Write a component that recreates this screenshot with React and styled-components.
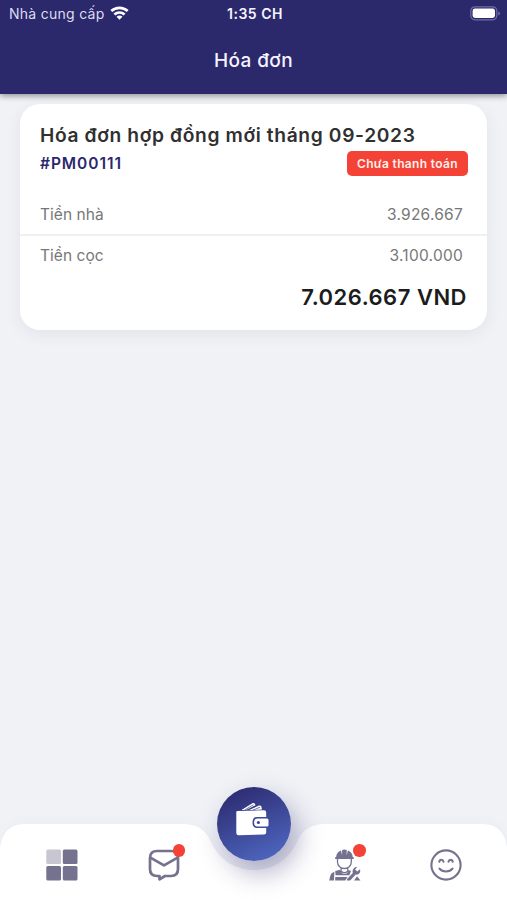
import React from "react";
import styled, { createGlobalStyle } from "styled-components";

const lines = [
  { label: "Tiền nhà", amount: "3.926.667" },
  { label: "Tiền cọc", amount: "3.100.000" },
];

export default function App() {
  return (
    <>
      <GlobalStyle />
      <Screen>
        <Header>
          <StatusBar>
            <Carrier>
              Nhà cung cấp <WifiIcon />
            </Carrier>
            <Clock>1:35 CH</Clock>
            <BatteryIcon />
          </StatusBar>
          <PageTitle>Hóa đơn</PageTitle>
        </Header>
        <Main>
          <Card>
            <CardTitle>Hóa đơn hợp đồng mới tháng 09-2023</CardTitle>
            <CardMeta>
              <Code>#PM00111</Code>
              <Status>Chưa thanh toán</Status>
            </CardMeta>
            {lines.map((line) => (
              <Line key={line.label}>
                <span>{line.label}</span>
                <Amount>{line.amount}</Amount>
              </Line>
            ))}
            <Total>7.026.667 VND</Total>
          </Card>
        </Main>
        <Nav>
          <NavShape />
          <NavItem>
            <GridIcon />
          </NavItem>
          <NavItem>
            <MailIcon />
            <Dot />
          </NavItem>
          <WalletButton aria-label="Hóa đơn">
            <WalletIcon />
          </WalletButton>
          <NavItem>
            <WorkerIcon />
            <Dot />
          </NavItem>
          <NavItem>
            <SmileIcon />
          </NavItem>
        </Nav>
      </Screen>
    </>
  );
}

function WifiIcon() {
  return (
    <svg width="19" height="15" viewBox="0 0 19 15" fill="none" stroke="#fff" strokeWidth="2.7">
      <path d="M1.3 5.1C6 .7 13 .7 17.7 5.1" />
      <path d="M4.4 8.5C7.3 5.8 11.7 5.8 14.6 8.5" />
      <path d="M9.5 13.8 6.5 10.7C8.2 9.2 10.8 9.2 12.5 10.7Z" fill="#fff" stroke="none" />
    </svg>
  );
}

function BatteryIcon() {
  return (
    <svg width="31" height="15" viewBox="0 0 31 15">
      <rect x=".8" y=".8" width="26" height="13" rx="4" fill="none" stroke="#716da3" strokeWidth="1.2" />
      <rect x="2.6" y="2.6" width="22.4" height="9.4" rx="2.4" fill="#fff" />
      <path d="M28.2 5.2Q30 6 30 7.4T28.2 9.5Z" fill="#716da3" />
    </svg>
  );
}

function NavShape() {
  return (
    <Backdrop viewBox="0 0 507 76" preserveAspectRatio="none">
      <path
        d="M0 76V24Q3 0 24 0H182C199 0 206 7 211 18C220 37 236 46 254 46S288 37 297 18C302 7 309 0 326 0H483Q504 0 507 24V76Z"
        fill="#fff"
      />
    </Backdrop>
  );
}

function GridIcon() {
  return (
    <svg width="32" height="32" viewBox="0 0 32 32" fill="#74728e">
      <rect x=".3" y=".4" width="14.7" height="14.5" rx="1.5" fill="#c7c6d1" />
      <rect x="16.8" y=".4" width="14.7" height="14.5" rx="1.5" />
      <rect x=".3" y="17" width="14.7" height="14.5" rx="1.5" />
      <rect x="16.8" y="17" width="14.7" height="14.5" rx="1.5" />
    </svg>
  );
}

function MailIcon() {
  return (
    <svg width="32" height="32" viewBox="0 0 32 32" fill="none" stroke="#74728e" strokeWidth="2.7" strokeLinejoin="round">
      <path d="M9 2H23Q30 2 30 9V20Q30 27 23 27H17L11.5 30.3V27H9Q2 27 2 20V9Q2 2 9 2Z" />
      <path d="M2.4 8.6 16 16.4 29.6 8.6" />
    </svg>
  );
}

function WalletIcon() {
  return (
    <svg width="34" height="34" viewBox="0 0 34 34" fill="#fff">
      <path d="M6.5 8.1 17.7 1.1Q19.2.5 20 2L20.5 3.2 11 8.1Z" />
      <path d="M14 8.1 24 3.6Q25.7 3 26.3 4.6L27 7.6Z" />
      <path d="M9.5 8.1 18.5 2.8M18 8.2 25 5.2" stroke="#363a88" strokeWidth=".7" />
      <path d="M2.2 9.1 29 8.3Q31.2 8.3 31.2 10.5V15H22Q17.5 15 17.5 20.5T22 26H31.2V30.5Q31.2 32.4 29 32.5L3.7 33.3Q1.3 33.3 1.3 31V10.2Q1.3 9.1 2.2 9.1Z" />
      <path d="M22.5 16.4H32Q33.5 16.4 33.5 18V23Q33.5 24.6 32 24.6H22.5Q19 24.6 19 20.5T22.5 16.4Z" />
      <circle cx="23.4" cy="20.5" r="1.6" fill="#3c489a" />
    </svg>
  );
}

function WorkerIcon() {
  return (
    <svg width="32" height="32" viewBox="0 0 32 32" fill="#74728e">
      <path d="M7.1 8.3C7.1 4.7 9.2 2.3 12 1.4L13.1 6.3V.9Q15.4.1 17.7.9V6.3L18.9 1.4C21.7 2.3 23.8 4.7 23.8 8.3H24.8V10.1H6.1V8.3Z" />
      <path
        d="M8.5 10V13C8.5 16.9 11.7 19.5 15.4 19.5S22.3 16.9 22.3 13V10M12.1 19V22Q15.4 25.5 18.8 22V19"
        fill="none"
        stroke="#74728e"
        strokeWidth="1.3"
      />
      <path d="M6.2 22.1 11.1 20.8 13.2 24.2Q15.4 25.7 18 24.2L19.7 21L22 22.1 20.4 26.3H6.6Z" />
      <path d="M4.7 23.1 5.4 23.2 4.9 31.5H.2L1.2 27Q2 24.1 4.7 23.1Z" />
      <path d="M6.3 28H18.5L16.3 31.5H6.1Z" />
      <path d="M28.3 17.8 26.1 20.5 28.2 22.5 31 20.3C32 23.5 29.8 26.1 26.7 25.6L21.2 31.5H17.8L18.3 29.7 23.8 24C23 20.7 25.1 17.9 28.3 17.8Z" />
      <path d="M28 27.2 31.5 31.5H25.1Z" />
    </svg>
  );
}

function SmileIcon() {
  return (
    <svg width="32" height="32" viewBox="0 0 32 32" fill="none" stroke="#74728e" strokeWidth="2.1" strokeLinecap="round">
      <circle cx="16" cy="16" r="14.6" />
      <path d="M9.5 19.6C12.6 23.4 19.4 23.4 22.5 19.6" />
      <path d="M9.3 12.7C9.8 10.1 12.9 10.1 13.5 12.7M18.5 12.7C19.1 10.1 22.2 10.1 22.7 12.7" />
    </svg>
  );
}

const GlobalStyle = createGlobalStyle`
  * {
    box-sizing: border-box;
  }
  body {
    margin: 0;
    font-family: Inter, "Noto Sans", sans-serif;
  }
`;

const Screen = styled.div`
  display: flex;
  flex-direction: column;
  height: 900px;
  overflow: hidden;
  background: #f0f2f6;
`;

const Header = styled.header`
  flex: none;
  height: 94px;
  color: #f5f4ff;
  background: #2b286c;
  box-shadow: 0 2px 6px rgba(0, 0, 0, 0.4);
`;

const StatusBar = styled.div`
  display: grid;
  grid-template-columns: 1fr auto 1fr;
  align-items: center;
  height: 27px;
  padding: 0 6px 0 9px;
  font-size: 14px;
  > svg {
    justify-self: end;
  }
`;

const Carrier = styled.span`
  display: flex;
  align-items: center;
  gap: 5px;
  letter-spacing: 0.27px;
  color: #dddcf0;
  svg {
    margin-bottom: 1px;
  }
`;

const Clock = styled.span`
  font-weight: 600;
  letter-spacing: 0.5px;
`;

const PageTitle = styled.h1`
  margin: 20px 0 0;
  font-size: 19px;
  font-weight: 500;
  line-height: 27px;
  letter-spacing: 0.4px;
  text-align: center;
`;

const Main = styled.main`
  flex: 1;
  padding: 10px 20px 0;
`;

const Card = styled.section`
  height: 226px;
  padding-top: 18px;
  border-radius: 20px;
  background: #fff;
  box-shadow: 0 4px 16px rgba(60, 70, 90, 0.08);
`;

const CardTitle = styled.h2`
  margin: 0;
  padding: 0 20px;
  font-size: 19.2px;
  font-weight: 600;
  line-height: 26px;
  letter-spacing: 0.64px;
  white-space: nowrap;
  color: #303030;
`;

const CardMeta = styled.div`
  display: flex;
  justify-content: space-between;
  align-items: center;
  height: 28px;
  margin-bottom: 18px;
  padding: 0 19px 0 20px;
`;

const Code = styled.span`
  margin-top: 2px;
  font-size: 15.5px;
  font-weight: 600;
  letter-spacing: 0.95px;
  color: #2b286c;
`;

const Status = styled.span`
  display: flex;
  justify-content: center;
  align-items: center;
  width: 121px;
  height: 25px;
  border-radius: 5px;
  margin-top: 3px;
  font-size: 12px;
  font-weight: 600;
  letter-spacing: 0.35px;
  color: #ffefec;
  background: #f44336;
`;

const Line = styled.div`
  display: flex;
  justify-content: space-between;
  align-items: center;
  height: 40px;
  padding: 0 24px 0 20px;
  font-size: 15.5px;
  letter-spacing: 0.05px;
  color: #777;
  & + & {
    border-top: 2px solid #eff0f4;
  }
`;

const Amount = styled.span`
  letter-spacing: 0.25px;
`;

const Total = styled.div`
  margin-top: 8px;
  padding-right: 20px;
  font-size: 22px;
  font-weight: 600;
  line-height: 30px;
  letter-spacing: 0.5px;
  text-align: right;
  color: #1c1c1c;
`;

const Nav = styled.nav`
  position: relative;
  flex: none;
  display: grid;
  grid-template-columns: 124px 80px 100px 81px 122px;
  justify-items: center;
  height: 76px;
`;

const Backdrop = styled.svg`
  position: absolute;
  inset: 0;
  width: 100%;
  height: 100%;
  filter: drop-shadow(0 -1px 5px rgba(60, 70, 110, 0.04));
`;

const NavItem = styled.div`
  position: relative;
  width: 32px;
  height: 32px;
  margin-top: 25px;
  svg {
    display: block;
  }
`;

const Dot = styled.span`
  position: absolute;
  top: -5px;
  right: -5px;
  width: 12.5px;
  height: 12.5px;
  border-radius: 50%;
  background: #f44336;
`;

const WalletButton = styled.button`
  position: relative;
  display: grid;
  place-items: center;
  width: 74px;
  height: 74px;
  margin-top: -37px;
  padding: 0 4px 10px 0;
  border: 0;
  border-radius: 50%;
  background: linear-gradient(155deg, #2b286c 4%, #4e67c0 92%);
  box-shadow: 7px 12px 26px rgba(43, 40, 108, 0.36);
`;
